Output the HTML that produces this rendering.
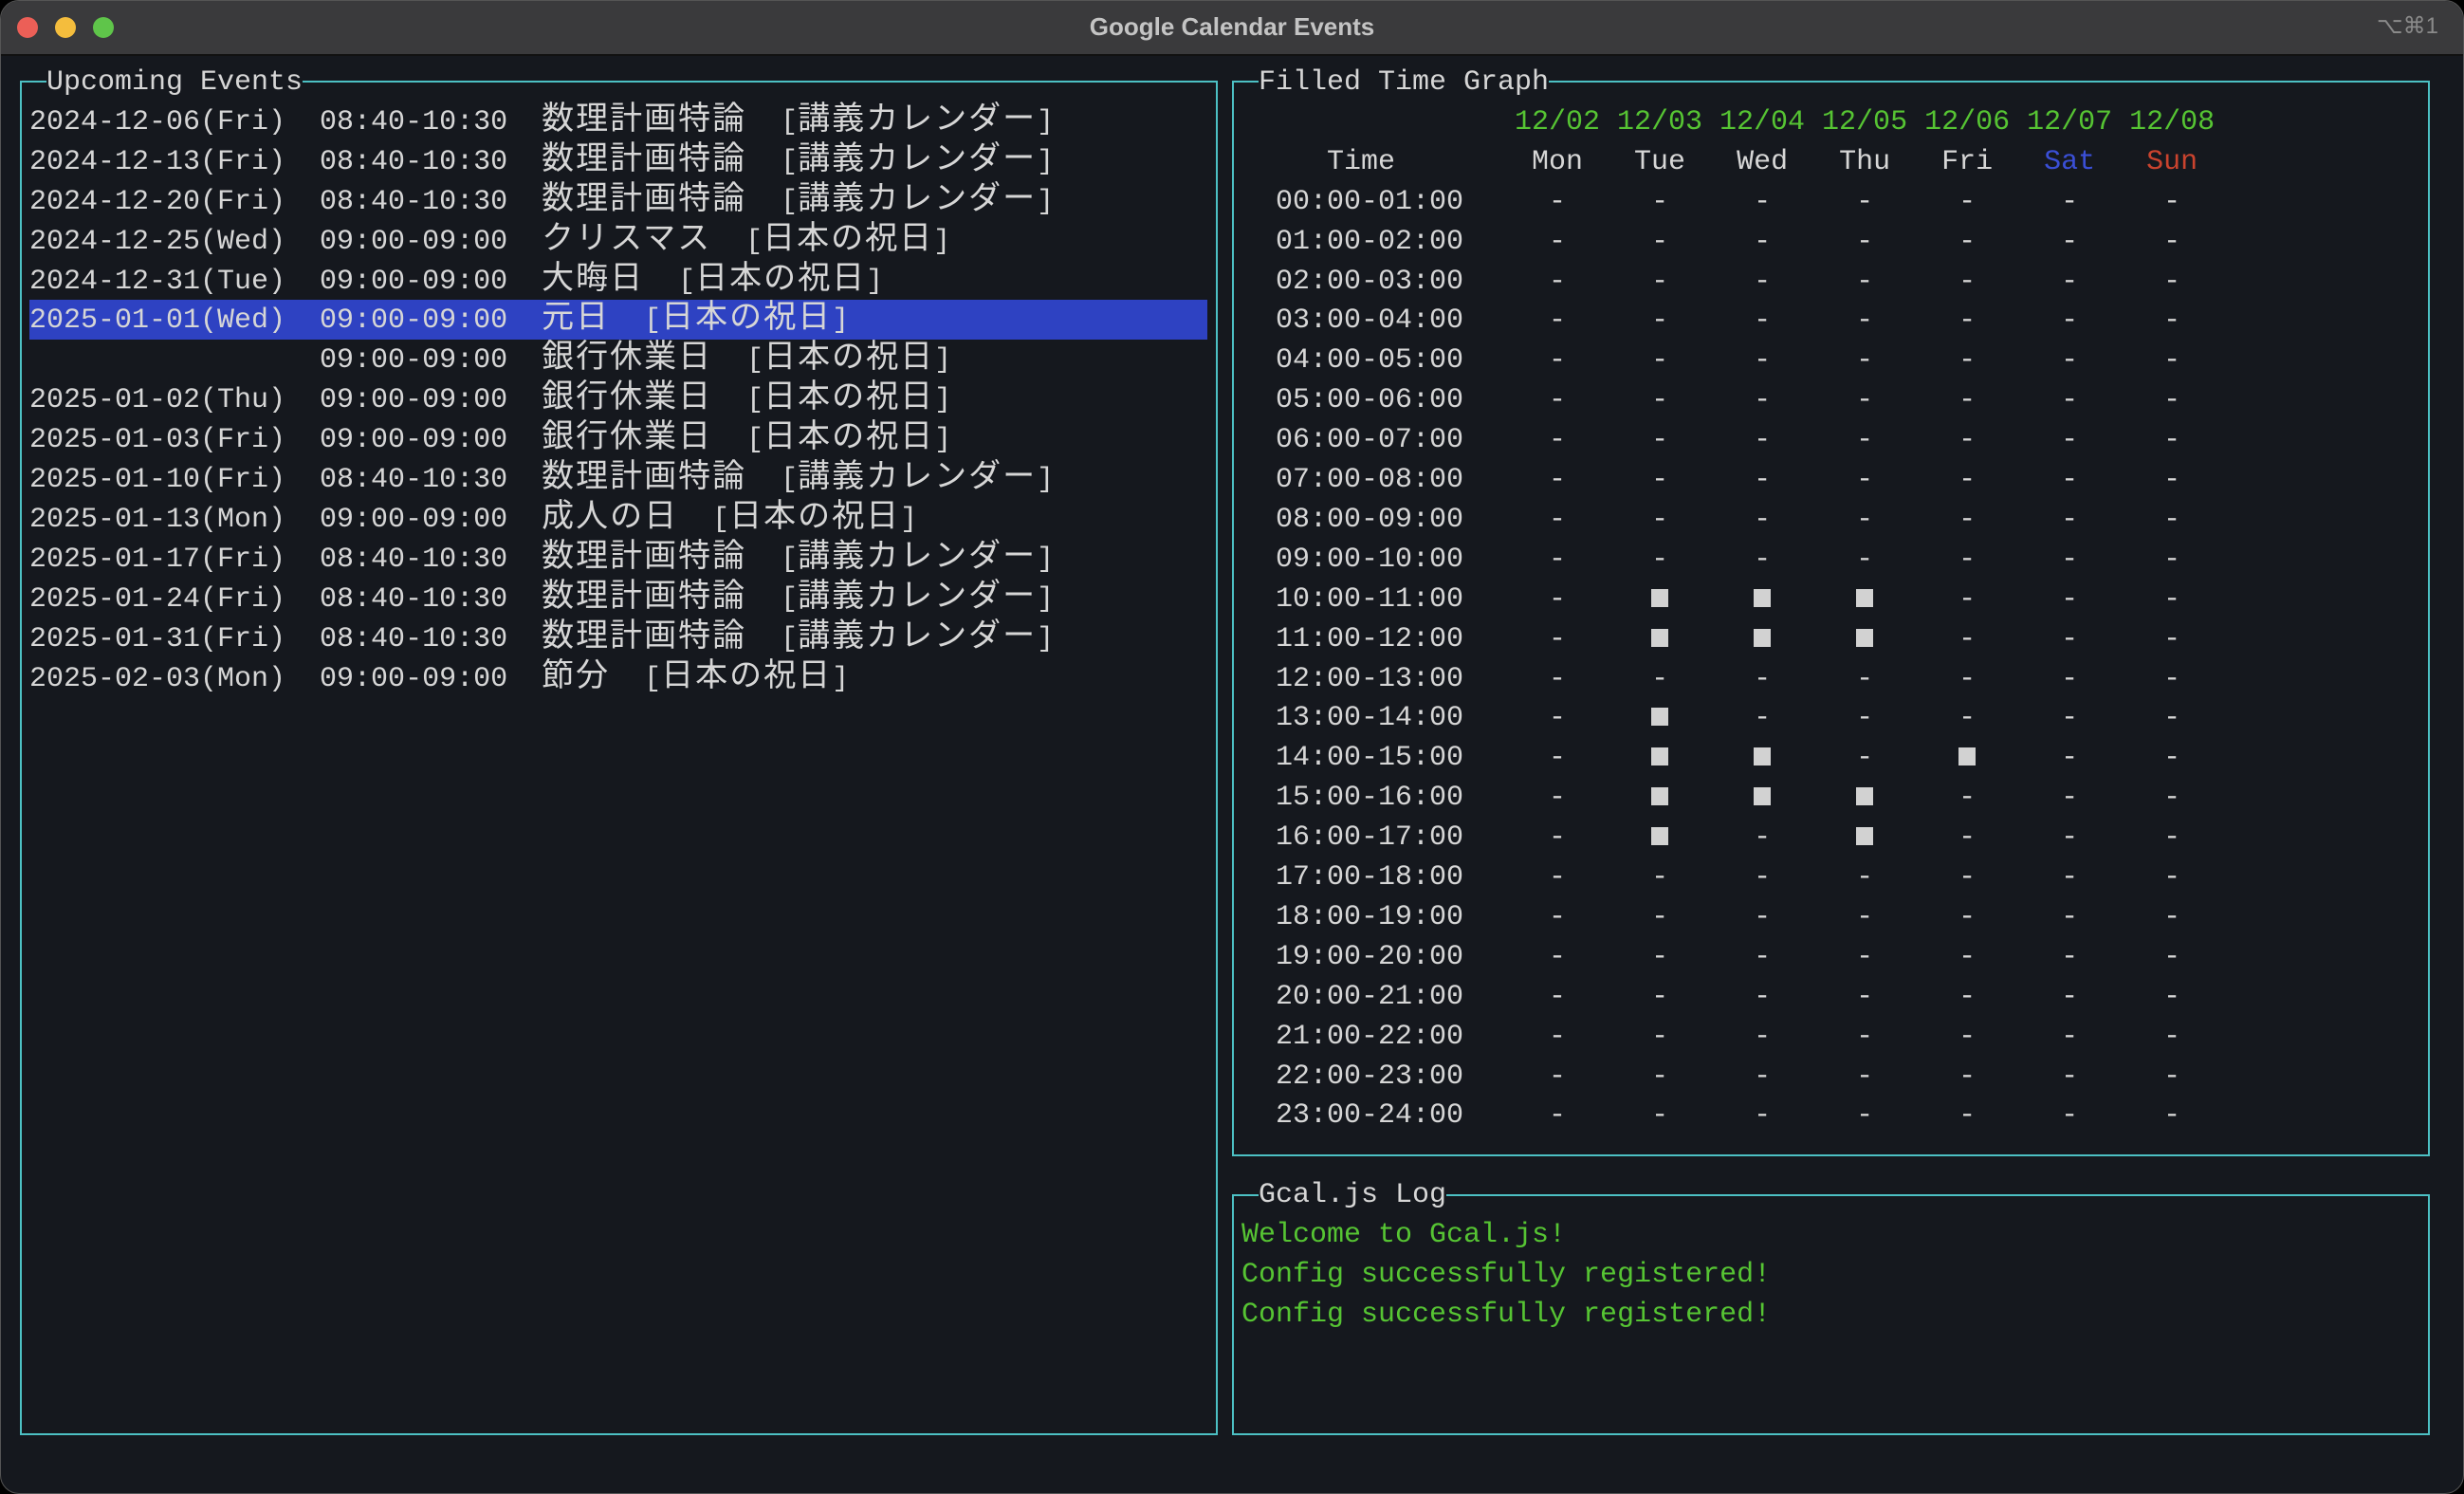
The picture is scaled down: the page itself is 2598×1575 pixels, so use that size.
<!DOCTYPE html>
<html><head><meta charset="utf-8"><style>
html,body{margin:0;padding:0;width:2598px;height:1575px;overflow:hidden;background:#000}
.win{position:absolute;left:0;top:0;width:2596px;height:1573px;background:#15181e;border:1px solid #555;border-radius:20px;overflow:hidden}
.tb{position:absolute;left:0;top:0;width:100%;height:56px;background:#3a3a3c;border-bottom:2px solid #111}
.dot{position:absolute;top:17px;width:22px;height:22px;border-radius:50%}
.title{position:absolute;left:0;width:100%;top:12px;text-align:center;font:bold 26px "Liberation Sans",sans-serif;color:#c4c4c4}
.kb{position:absolute;right:26px;top:12px;font:24px "Liberation Sans","DejaVu Sans",sans-serif;color:#8a8a8a}
pre{position:absolute;margin:0;font:30px/41.9px "Liberation Mono","Noto Sans CJK JP",monospace;color:#d6d6d6;white-space:pre;top:calc(66px + 41.9px * var(--r))}
.w{font-family:"Noto Sans CJK JP",sans-serif;font-size:34px;letter-spacing:2px;line-height:0}
.box{position:absolute;border:2px solid #4cc0c4}
.lab{background:#15181e}
.hl{position:absolute;left:30px;width:1242px;height:41.9px;top:calc(64px + 41.9px * 6);background:#2e42c2}
.g{color:#56c433}
i{display:inline-block;width:18px;height:20px;position:relative;vertical-align:middle}
i:after{content:"";position:absolute;left:0;top:0;width:18px;height:19px;background:#d2d2d2}
</style></head><body><div class="win">
<div class="tb">
<div class="dot" style="left:17px;background:#ec5f57"></div>
<div class="dot" style="left:57px;background:#f4bd3d"></div>
<div class="dot" style="left:97px;background:#5fc54a"></div>
<div class="title">Google Calendar Events</div>
<div class="kb">⌥⌘1</div>
</div>

<div class="box" style="left:20px;top:84px;width:1259px;height:1424px"></div>
<div class="box" style="left:1298px;top:84px;width:1259px;height:1130px"></div>
<div class="box" style="left:1298px;top:1258px;width:1259px;height:250px"></div>
<div class="hl"></div>

<pre style="--r:0;left:48px"><span class="lab">Upcoming Events</span></pre>
<pre style="--r:0;left:1326px"><span class="lab">Filled Time Graph</span></pre>
<pre style="--r:28;left:1326px"><span class="lab">Gcal.js Log</span></pre>

<pre style="--r:1;left:30px">2024-12-06(Fri)  08:40-10:30  <span class="w">数理計画特論</span>  [<span class="w">講義カレンダー</span>]</pre>
<pre style="--r:2;left:30px">2024-12-13(Fri)  08:40-10:30  <span class="w">数理計画特論</span>  [<span class="w">講義カレンダー</span>]</pre>
<pre style="--r:3;left:30px">2024-12-20(Fri)  08:40-10:30  <span class="w">数理計画特論</span>  [<span class="w">講義カレンダー</span>]</pre>
<pre style="--r:4;left:30px">2024-12-25(Wed)  09:00-09:00  <span class="w">クリスマス</span>  [<span class="w">日本の祝日</span>]</pre>
<pre style="--r:5;left:30px">2024-12-31(Tue)  09:00-09:00  <span class="w">大晦日</span>  [<span class="w">日本の祝日</span>]</pre>
<pre style="--r:6;left:30px">2025-01-01(Wed)  09:00-09:00  <span class="w">元日</span>  [<span class="w">日本の祝日</span>]</pre>
<pre style="--r:7;left:30px">                 09:00-09:00  <span class="w">銀行休業日</span>  [<span class="w">日本の祝日</span>]</pre>
<pre style="--r:8;left:30px">2025-01-02(Thu)  09:00-09:00  <span class="w">銀行休業日</span>  [<span class="w">日本の祝日</span>]</pre>
<pre style="--r:9;left:30px">2025-01-03(Fri)  09:00-09:00  <span class="w">銀行休業日</span>  [<span class="w">日本の祝日</span>]</pre>
<pre style="--r:10;left:30px">2025-01-10(Fri)  08:40-10:30  <span class="w">数理計画特論</span>  [<span class="w">講義カレンダー</span>]</pre>
<pre style="--r:11;left:30px">2025-01-13(Mon)  09:00-09:00  <span class="w">成人の日</span>  [<span class="w">日本の祝日</span>]</pre>
<pre style="--r:12;left:30px">2025-01-17(Fri)  08:40-10:30  <span class="w">数理計画特論</span>  [<span class="w">講義カレンダー</span>]</pre>
<pre style="--r:13;left:30px">2025-01-24(Fri)  08:40-10:30  <span class="w">数理計画特論</span>  [<span class="w">講義カレンダー</span>]</pre>
<pre style="--r:14;left:30px">2025-01-31(Fri)  08:40-10:30  <span class="w">数理計画特論</span>  [<span class="w">講義カレンダー</span>]</pre>
<pre style="--r:15;left:30px">2025-02-03(Mon)  09:00-09:00  <span class="w">節分</span>  [<span class="w">日本の祝日</span>]</pre>

<pre style="--r:1;left:1596px" class="g">12/02 12/03 12/04 12/05 12/06 12/07 12/08</pre>
<pre style="--r:2;left:1398px">Time        Mon   Tue   Wed   Thu   Fri   <span style="color:#3a4fd6">Sat</span>   <span style="color:#c9432e">Sun</span></pre>
<pre style="--r:3;left:1344px">00:00-01:00     -     -     -     -     -     -     -</pre>
<pre style="--r:4;left:1344px">01:00-02:00     -     -     -     -     -     -     -</pre>
<pre style="--r:5;left:1344px">02:00-03:00     -     -     -     -     -     -     -</pre>
<pre style="--r:6;left:1344px">03:00-04:00     -     -     -     -     -     -     -</pre>
<pre style="--r:7;left:1344px">04:00-05:00     -     -     -     -     -     -     -</pre>
<pre style="--r:8;left:1344px">05:00-06:00     -     -     -     -     -     -     -</pre>
<pre style="--r:9;left:1344px">06:00-07:00     -     -     -     -     -     -     -</pre>
<pre style="--r:10;left:1344px">07:00-08:00     -     -     -     -     -     -     -</pre>
<pre style="--r:11;left:1344px">08:00-09:00     -     -     -     -     -     -     -</pre>
<pre style="--r:12;left:1344px">09:00-10:00     -     -     -     -     -     -     -</pre>
<pre style="--r:13;left:1344px">10:00-11:00     -     <i></i>     <i></i>     <i></i>     -     -     -</pre>
<pre style="--r:14;left:1344px">11:00-12:00     -     <i></i>     <i></i>     <i></i>     -     -     -</pre>
<pre style="--r:15;left:1344px">12:00-13:00     -     -     -     -     -     -     -</pre>
<pre style="--r:16;left:1344px">13:00-14:00     -     <i></i>     -     -     -     -     -</pre>
<pre style="--r:17;left:1344px">14:00-15:00     -     <i></i>     <i></i>     -     <i></i>     -     -</pre>
<pre style="--r:18;left:1344px">15:00-16:00     -     <i></i>     <i></i>     <i></i>     -     -     -</pre>
<pre style="--r:19;left:1344px">16:00-17:00     -     <i></i>     -     <i></i>     -     -     -</pre>
<pre style="--r:20;left:1344px">17:00-18:00     -     -     -     -     -     -     -</pre>
<pre style="--r:21;left:1344px">18:00-19:00     -     -     -     -     -     -     -</pre>
<pre style="--r:22;left:1344px">19:00-20:00     -     -     -     -     -     -     -</pre>
<pre style="--r:23;left:1344px">20:00-21:00     -     -     -     -     -     -     -</pre>
<pre style="--r:24;left:1344px">21:00-22:00     -     -     -     -     -     -     -</pre>
<pre style="--r:25;left:1344px">22:00-23:00     -     -     -     -     -     -     -</pre>
<pre style="--r:26;left:1344px">23:00-24:00     -     -     -     -     -     -     -</pre>

<pre style="--r:29;left:1308px" class="g">Welcome to Gcal.js!</pre>
<pre style="--r:30;left:1308px" class="g">Config successfully registered!</pre>
<pre style="--r:31;left:1308px" class="g">Config successfully registered!</pre>
</div></body></html>
